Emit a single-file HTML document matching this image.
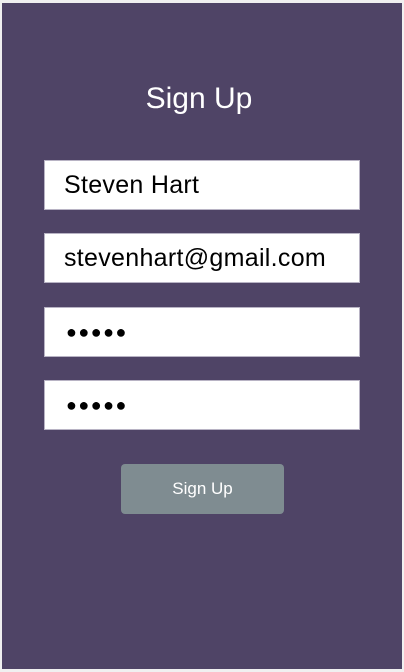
<!DOCTYPE html>
<html><head><style>
html,body{margin:0;padding:0;width:404px;height:672px;background:#f0f0f0;overflow:hidden;font-family:"Liberation Sans",sans-serif}
#p{position:absolute;left:2px;top:3px;width:400px;height:666px;background:#4f4466}
h1{position:absolute;left:0;width:398px;top:81px;margin:0;text-align:center;color:#fff;font-weight:normal;font-size:30px;line-height:36px}
.i{position:absolute;left:44px;width:316px;height:50px;background:#fff;border:1px solid #b8b3c4;box-sizing:border-box;font-size:25px;letter-spacing:0.3px;line-height:49px;padding-left:19px;color:#000}
.d{font-size:18px;letter-spacing:1.5px;font-weight:bold;padding-left:21px;line-height:48px}
.b{position:absolute;left:121px;top:464px;width:163px;height:50px;background:#7f8c91;border-radius:4px;color:#fff;font-size:17px;text-align:center;line-height:50px}
</style></head><body>
<div id="p"></div>
<h1>Sign Up</h1>
<div class="i" style="top:160px">Steven Hart</div>
<div class="i" style="top:233px">stevenhart@gmail.com</div>
<div class="i d" style="top:307px">●●●●●</div>
<div class="i d" style="top:380px">●●●●●</div>
<div class="b">Sign Up</div>
</body></html>
